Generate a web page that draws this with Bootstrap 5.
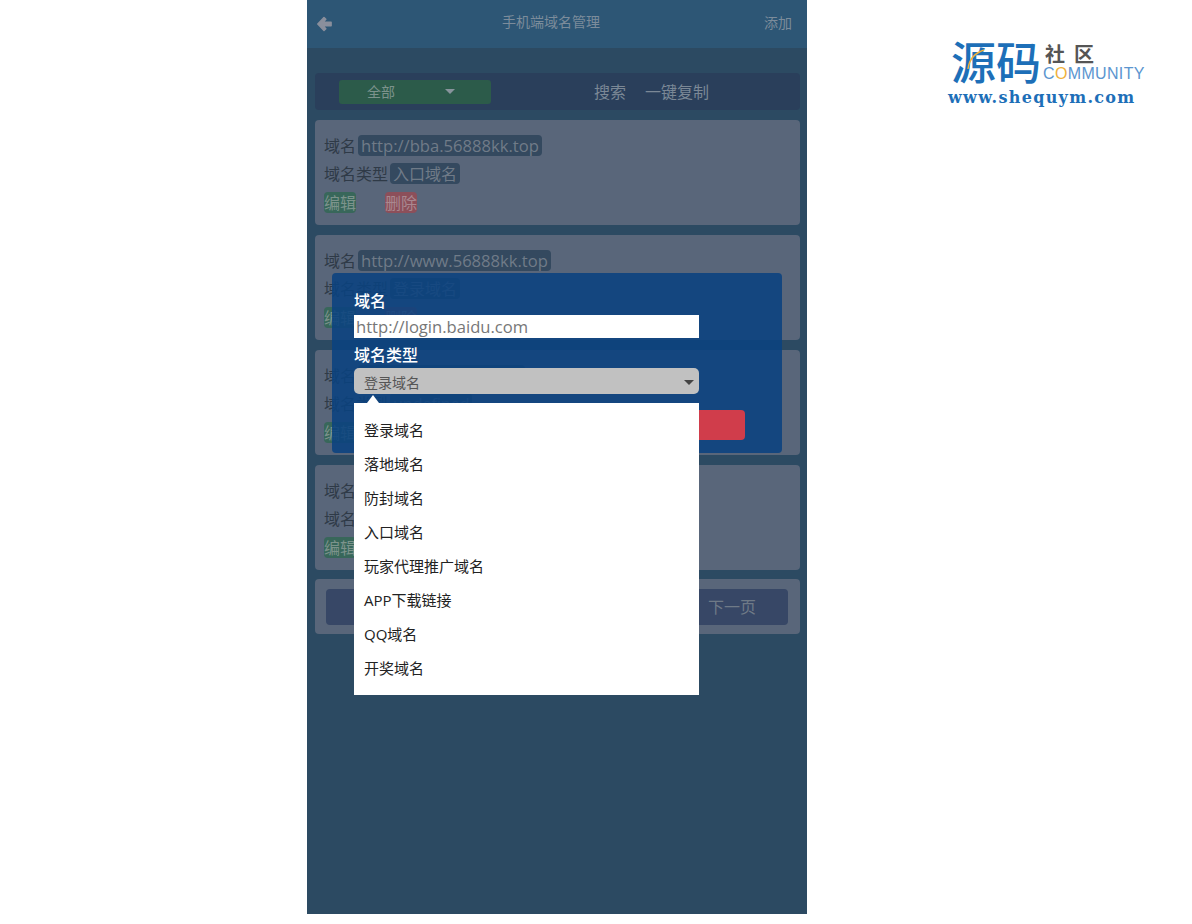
<!DOCTYPE html>
<html lang="zh-CN">
<head>
  <meta charset="UTF-8" />
  <meta name="viewport" content="width=device-width, initial-scale=1" />
  <title>手机端域名管理</title>
  <link href="https://cdn.jsdelivr.net/npm/bootstrap@5.3.0/dist/css/bootstrap.min.css" rel="stylesheet" />
  <style>
    body { background: #fff; font-family: "Open Sans", "Noto Sans CJK SC", sans-serif; font-size: 16px; }
    .page-wrap { padding-left: 307px; }
    .phone { width: 500px; height: 914px; background: #2c4a62; flex: none; }
    .top-bar { height: 48px; background: #2d5675; padding: 0 15px 0 10px; color: #7c8c9b; font-size: 14px; }
    .top-bar .title-text { left: 195px; top: 12px; line-height: 20px; }
    .add-link { margin-bottom: 4px; }
    .content-area { padding: 25px 7px 0 8px; }
    .filter-bar { height: 37px; background: #2a3f5b; border-radius: 4px; margin-bottom: 10px; padding: 7px 0 0 24px; color: #7b8896; }
    .type-pick { width: 152px; height: 24px; background: #2c5b4a; border-radius: 3px; padding: 0 0 2px 28px; font-size: 14px; color: #7c938c; }
    .pick-caret { width: 0; height: 0; border: 5px solid transparent; border-top: 5px solid #88949c; border-bottom: 0; margin-left: 50px; }
    .filter-link { line-height: 24px; margin-left: 103px; }
    .filter-link + .filter-link { margin-left: 19px; }
    .domain-row { height: 105px; background: #59667a; border-radius: 4px; padding: 15px 9px; margin-bottom: 10px; color: #2f3a47; gap: 7px; }
    .row-line { height: 21px; line-height: 23px; }
    .row-line.btn-line { margin-top: 1px; }
    .chip { background: #34495f; color: #707b88; border-radius: 4px; padding: 0 3px; margin-left: 2px; height: 21px; line-height: 23px; }
    .chip.url-chip { font-size: 16.6px; line-height: 21px; }
    .chip.blank-chip { width: 167px; }
    .row-btn { height: 21px; line-height: 23px; width: 32px; border-radius: 4px; }
    .row-btn.edit { background: #38675a; color: #7c938c; }
    .row-btn.del { background: #8c4f5a; color: #a98890; margin-left: 29px; }
    .pager-row { height: 55px; background: #59667a; border-radius: 4px; padding: 10px 12px 0 11px; margin-top: -1px; }
    .pager-inner { height: 36px; background: #374766; border-radius: 4px; color: #6f7a87; padding: 0 32px; line-height: 36px; }
    .edit-dialog { position: absolute; left: 25px; top: 273px; width: 450px; height: 180px; background: rgba(10, 66, 128, .88); border-radius: 4px; padding: 17px 37px 0 22px; color: #fff; }
    .edit-dialog label { display: block; line-height: 22px; height: 25px; font-weight: 500; }
    .edit-dialog label.type-label { padding-top: 1px; }
    .url-input { display: block; width: 345px; height: 23px; border: 0; padding: 0 2px; margin-bottom: 5px; font-size: 16.6px; line-height: 23px; background: #fff; outline: 0; }
    .url-input::placeholder { color: #777; opacity: 1; }
    .type-select { width: 345px; height: 26px; background: #c1c1c1; border-radius: 5px; color: #555; font-size: 14px; padding: 3px 5px 0 10px; }
    .select-caret { width: 0; height: 0; border: 5px solid transparent; border-top: 5px solid #444; border-bottom: 0; }
    .save-btn { width: 120px; height: 30px; background: #d03d4b; border-radius: 4px; margin-top: 16px; margin-left: auto; }
    .type-menu { position: absolute; left: 47px; top: 403px; width: 345px; height: 292px; background: #fff; padding: 10px 0; color: #222; font-size: 15px; }
    .type-menu::before { content: ""; position: absolute; left: 13px; top: -8px; border: 6px solid transparent; border-top: 0; border-bottom: 8px solid #fff; }
    .type-menu li { height: 34px; line-height: 34px; padding-left: 10px; }
    .logo-box { margin: 42px 0 0 141px; width: 200px; height: 70px; color: #1d6fb8; }
    .logo-big { font-size: 45px; line-height: 40px; font-weight: 500; font-family: "Noto Sans CJK SC", sans-serif; left: 3px; top: -1px; }
    .logo-arc { left: 18px; top: 6px; }
    .logo-cn { left: 97px; top: 2px; font-size: 20px; line-height: 20px; letter-spacing: 9px; color: #555; font-weight: 700; font-family: "Noto Sans CJK SC", sans-serif; }
    .logo-en { left: 95px; top: 25px; font-size: 16px; line-height: 13px; color: #5b95cf; font-family: "Liberation Sans", sans-serif; letter-spacing: .35px; }
    .logo-en i { color: #f0b13c; font-style: normal; }
    .logo-url { left: 0; top: 46px; font-family: "DejaVu Serif", serif; font-weight: 700; font-size: 16px; line-height: 20px; letter-spacing: 1.3px; white-space: nowrap; }
  </style>
</head>
<body>
  <div class="page-wrap d-flex">
    <div class="phone position-relative">
      <div class="top-bar d-flex align-items-center justify-content-between position-relative">
        <svg width="15" height="16" viewBox="0 0 15 16"><path fill="#8a8f9c" stroke="#8a8f9c" stroke-width="1.500" stroke-linejoin="round" d="M7 1.500l1.800 1.800-2.700 2.900h8v3.600h-8l2.700 2.900L7 14.500 .8 8z"/></svg>
        <span class="title-text position-absolute">手机端域名管理</span>
        <span class="add-link">添加</span>
      </div>
      <div class="content-area">
        <div class="filter-bar d-flex">
          <div class="type-pick d-flex align-items-center"><span>全部</span><span class="pick-caret"></span></div>
          <span class="filter-link">搜索</span>
          <span class="filter-link">一键复制</span>
        </div>

        <div class="domain-row d-flex flex-column">
          <div class="row-line d-flex"><span>域名</span><span class="chip url-chip">http://bba.56888kk.top</span></div>
          <div class="row-line d-flex"><span>域名类型</span><span class="chip">入口域名</span></div>
          <div class="row-line btn-line d-flex"><span class="row-btn edit">编辑</span><span class="row-btn del">删除</span></div>
        </div>
        <div class="domain-row d-flex flex-column">
          <div class="row-line d-flex"><span>域名</span><span class="chip url-chip">http://www.56888kk.top</span></div>
          <div class="row-line d-flex"><span>域名类型</span><span class="chip">登录域名</span></div>
          <div class="row-line btn-line d-flex"><span class="row-btn edit">编辑</span><span class="row-btn del">删除</span></div>
        </div>
        <div class="domain-row d-flex flex-column">
          <div class="row-line d-flex"><span>域名</span><span class="chip blank-chip"></span></div>
          <div class="row-line d-flex"><span>域名类型</span><span class="chip">undefined</span></div>
          <div class="row-line btn-line d-flex"><span class="row-btn edit">编辑</span></div>
        </div>
        <div class="domain-row d-flex flex-column">
          <div class="row-line d-flex"><span>域名</span></div>
          <div class="row-line d-flex"><span>域名类型</span></div>
          <div class="row-line btn-line d-flex"><span class="row-btn edit">编辑</span></div>
        </div>

        <div class="pager-row">
          <div class="pager-inner d-flex justify-content-end"><span>下一页</span></div>
        </div>
      </div>

      <div class="edit-dialog">
        <label for="urlInput">域名</label>
        <input id="urlInput" class="url-input" type="text" placeholder="http://login.baidu.com" />
        <label class="type-label">域名类型</label>
        <div class="type-select d-flex align-items-center justify-content-between"><span>登录域名</span><span class="select-caret"></span></div>
        <div class="d-flex"><div class="save-btn"></div></div>
      </div>

      <ul class="type-menu list-unstyled mb-0">
        <li>登录域名</li>
        <li>落地域名</li>
        <li>防封域名</li>
        <li>入口域名</li>
        <li>玩家代理推广域名</li>
        <li>APP下载链接</li>
        <li>QQ域名</li>
        <li>开奖域名</li>
      </ul>
    </div>

    <div class="logo-box position-relative flex-none">
      <span class="logo-big position-absolute">源码</span>
      <svg class="logo-arc position-absolute" width="20" height="22" viewBox="0 0 20 22"><path d="M2 21C3 12 9 5 18 2" fill="none" stroke="#f0b13c" stroke-width="1.500"/></svg>
      <span class="logo-cn position-absolute">社区</span>
      <span class="logo-en position-absolute">C<i>O</i>MMUNITY</span>
      <span class="logo-url position-absolute">www.shequym.com</span>
    </div>
  </div>
  <script src="https://cdn.jsdelivr.net/npm/bootstrap@5.3.0/dist/js/bootstrap.bundle.min.js"></script>
</body>
</html>
